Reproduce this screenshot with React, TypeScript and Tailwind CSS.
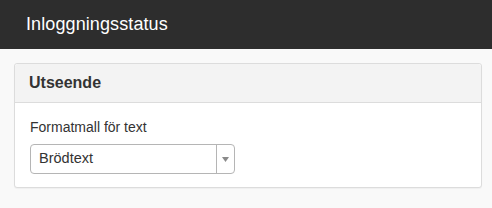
import React from 'react'

function App() {
    return (
        <div className="w-[492px] h-[208px] bg-[#f9f9f9] font-['Liberation_Sans',Arial,sans-serif] overflow-hidden">
            {/* Top bar */}
            <header className="h-[49px] bg-[#2d2d2d] flex items-center pl-[26px]">
                <span className="text-white text-[18px] tracking-[0.1px]">Inloggningsstatus</span>
            </header>

            {/* Panel */}
            <div className="pt-[14px] pl-[14px] pr-[10px]">
                <div className="bg-white border border-[#dcdcdc] rounded-[3px] shadow-[0_1px_1px_rgba(0,0,0,0.04)]">
                    <div className="h-[39px] bg-[#f3f3f3] border-b border-[#dcdcdc] rounded-t-[3px] flex items-center pl-[14px]">
                        <h2 className="text-[16px] font-bold text-[#333]">Utseende</h2>
                    </div>
                    <div className="pl-[15px] pt-[15px] pb-[13px]">
                        <label className="block text-[14px] text-[#333] leading-[18px] mb-[8px]">Formatmall för text</label>
                        <div className="w-[205px] h-[30px] border border-[#b5b5b5] rounded-[4px] flex items-stretch bg-white">
                            <span className="flex-1 flex items-center pl-[8px] text-[14.5px] text-[#333]">Brödtext</span>
                            <span className="w-[18px] border-l border-[#b5b5b5] flex items-center justify-center">
                                <svg width="7" height="5" viewBox="0 0 7 5">
                                    <path d="M0 0 L7 0 L3.5 5 Z" fill="#8a8a8a" />
                                </svg>
                            </span>
                        </div>
                    </div>
                </div>
            </div>
        </div>
    )
}

export default App
